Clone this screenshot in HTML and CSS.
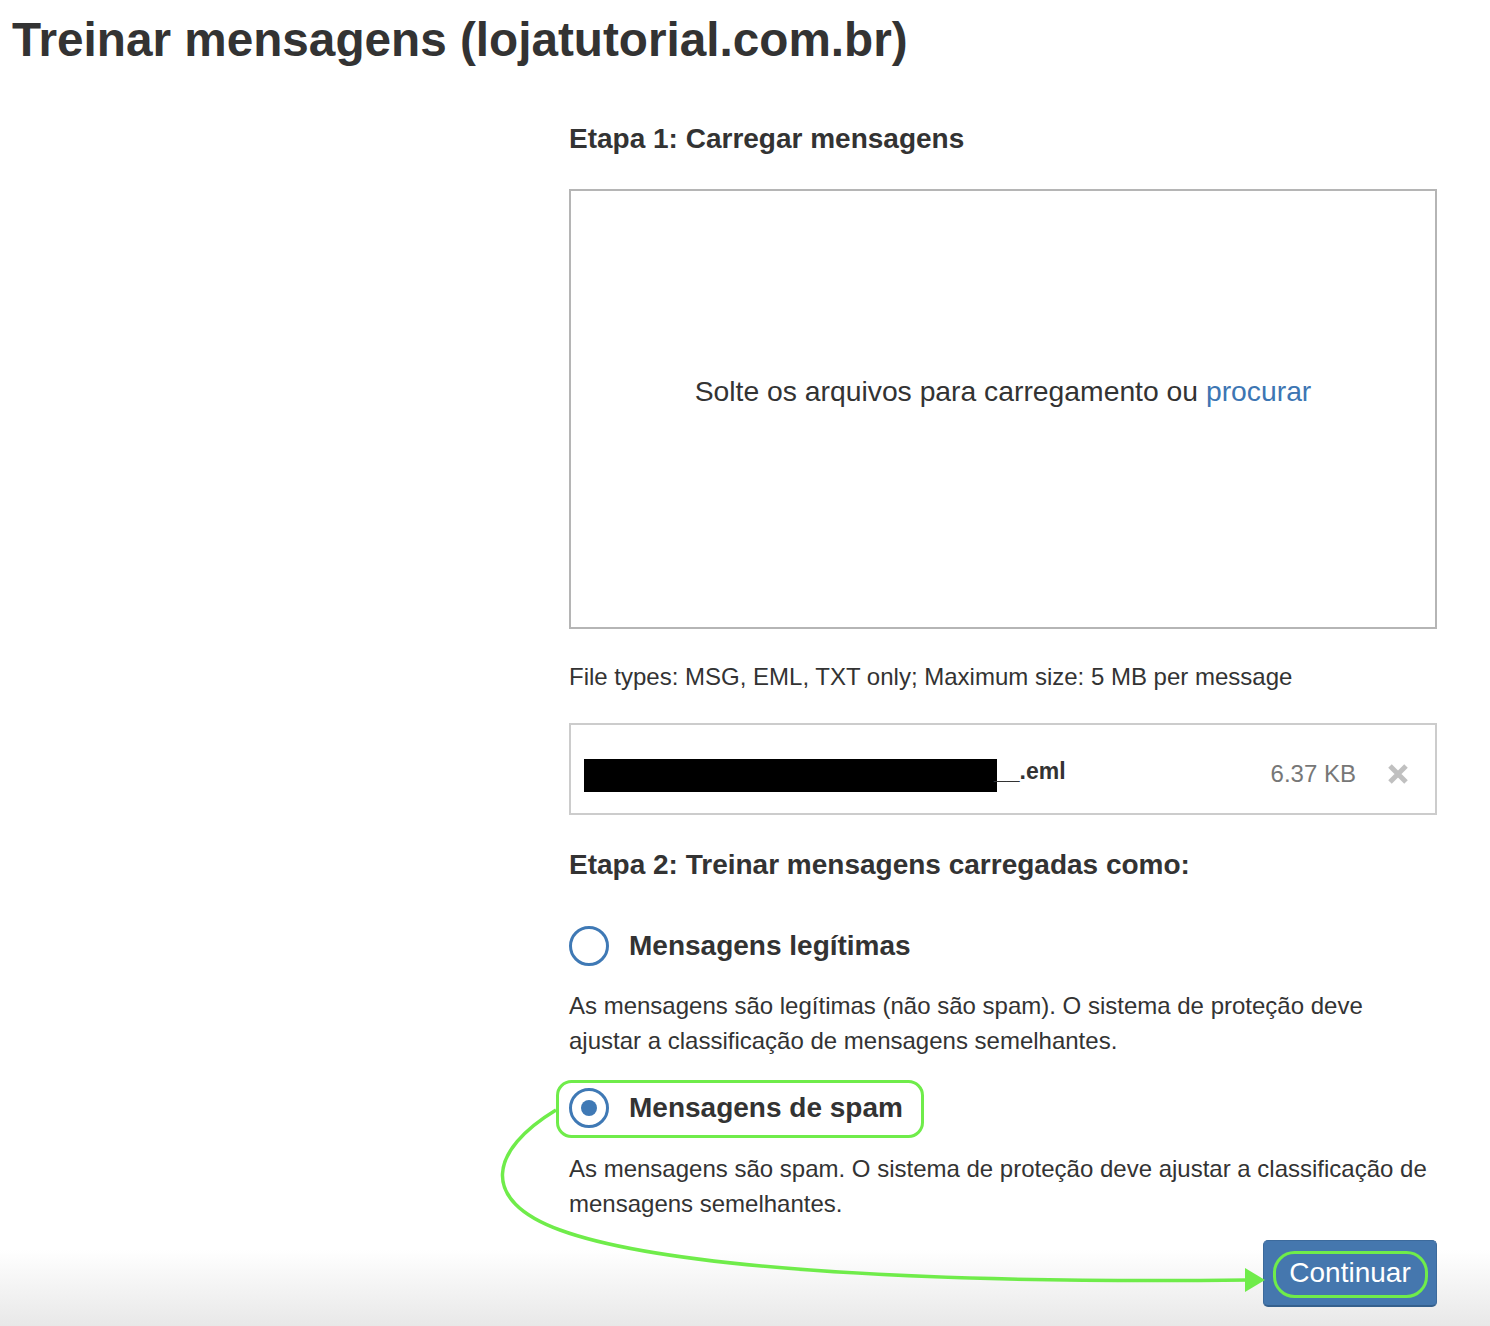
FILE: index.html
```html
<!DOCTYPE html>
<html lang="pt-BR">
<head>
<meta charset="utf-8">
<title>Treinar mensagens</title>
<link rel="stylesheet" href="styles.css">
</head>
<body>
<div class="page">
  <h1 class="title">Treinar mensagens (lojatutorial.com.br)</h1>
  <main class="main">
    <h2 class="step step-1">Etapa 1: Carregar mensagens</h2>
    <div class="dropzone">
      <p class="drop-text">Solte os arquivos para carregamento ou <a class="link" href="#">procurar</a></p>
    </div>
    <p class="hint">File types: MSG, EML, TXT only; Maximum size: 5 MB per message</p>
    <div class="file-row">
      <div class="file-name"><span class="redact"></span><span class="ext">__.eml</span></div>
      <span class="file-size">6.37 KB</span>
      <svg class="remove" width="22" height="22" viewBox="0 0 22 22"><path d="M3 3 L19 19 M19 3 L3 19" stroke="#c0c0c0" stroke-width="5" stroke-linecap="butt" fill="none"/></svg>
    </div>
    <h2 class="step step-2">Etapa 2: Treinar mensagens carregadas como:</h2>
    <label class="option option-1"><span class="radio"></span><span class="option-label">Mensagens legítimas</span></label>
    <p class="desc desc-1">As mensagens são legítimas (não são spam). O sistema de proteção deve ajustar a classificação de mensagens semelhantes.</p>
    <label class="option option-2"><span class="radio checked"></span><span class="option-label">Mensagens de spam</span></label>
    <p class="desc desc-2">As mensagens são spam. O sistema de proteção deve ajustar a classificação de mensagens semelhantes.</p>
    <div class="actions"><button class="btn" type="button">Continuar</button></div>
  </main>
  <svg class="annot" width="1490" height="1326" viewBox="0 0 1490 1326">
    <rect x="557.5" y="1081.5" width="365" height="55" rx="14" fill="none" stroke="#6fec4a" stroke-width="3"/>
    <rect x="1274.5" y="1252.5" width="152" height="44" rx="20" fill="none" stroke="#6fec4a" stroke-width="3"/>
    <path d="M556 1110 C 490 1150, 478 1200, 560 1230 C 658 1266, 900 1284, 1248 1280" fill="none" stroke="#6fec4a" stroke-width="3.5"/>
    <polygon points="1245,1268 1265,1280 1245,1292" fill="#6fec4a"/>
  </svg>
</div>
</body>
</html>
```

FILE: styles.css
```css
html {
  min-height: 100%;
  background: linear-gradient(to bottom, #ffffff 0, #ffffff 1250px, #e8e8e8 1326px);
}
body {
  margin: 0;
  font-family: "Liberation Sans", Arial, Helvetica, sans-serif;
  color: #333333;
}
.page {
  position: relative;
  width: 1490px;
  height: 1326px;
}
.title {
  margin: 0;
  padding: 12px 0 0 12px;
  font-size: 47.7px;
  line-height: 56px;
  font-weight: bold;
  color: #333333;
}
.main {
  margin-left: 569px;
  width: 868px;
}
.step {
  margin: 0;
  font-size: 28px;
  line-height: 34px;
  font-weight: bold;
}
.step-1 { margin-top: 54px; }
.step-2 { margin-top: 33px; }
.dropzone {
  margin-top: 33px;
  height: 440px;
  box-sizing: border-box;
  border: 2px solid #b5b5b5;
  display: flex;
  align-items: center;
  justify-content: center;
  padding-bottom: 36px;
}
.drop-text {
  margin: 0;
  font-size: 28.3px;
  line-height: 34px;
}
.link {
  color: #3d76b3;
  text-decoration: none;
}
.hint {
  margin: 31px 0 0;
  font-size: 24px;
  line-height: 34px;
}
.file-row {
  margin-top: 29px;
  height: 92px;
  box-sizing: border-box;
  border: 2px solid #cccccc;
  display: flex;
  align-items: center;
  padding: 10px 26px 0 13px;
}
.file-name {
  flex: 1;
  display: flex;
  align-items: center;
}
.redact {
  display: inline-block;
  width: 413px;
  height: 33px;
  background: #000000;
  margin-top: 3px;
}
.ext {
  font-size: 23px;
  font-weight: bold;
  line-height: 30px;
  margin-top: -6px;
  margin-left: -3px;
}
.file-size {
  font-size: 24px;
  color: #777777;
  margin-right: 31px;
}
.remove {
  display: block;
}
.option {
  display: flex;
  align-items: center;
  gap: 20px;
  height: 40px;
}
.option-1 { margin-top: 44px; }
.option-2 { margin-top: 30px; }
.radio {
  width: 40px;
  height: 40px;
  box-sizing: border-box;
  border: 3px solid #3f79b5;
  border-radius: 50%;
  display: flex;
  align-items: center;
  justify-content: center;
}
.radio.checked::after {
  content: "";
  width: 16px;
  height: 16px;
  border-radius: 50%;
  background: #3f79b5;
}
.option-label {
  font-size: 28px;
  font-weight: bold;
}
.desc {
  margin: 0;
  font-size: 24px;
  line-height: 35px;
}
.desc-1 { margin-top: 22px; }
.desc-2 { margin-top: 23px; }
.actions {
  margin-top: 19px;
  display: flex;
  justify-content: flex-end;
}
.btn {
  width: 174px;
  height: 67px;
  box-sizing: border-box;
  background: #4577ae;
  border: 1px solid #3c6a9c;
  border-bottom: 2px solid #35608d;
  border-radius: 5px;
  color: #ffffff;
  font-family: "Liberation Sans", Arial, sans-serif;
  font-size: 28px;
  padding: 0;
}
.annot {
  position: absolute;
  left: 0;
  top: 0;
  pointer-events: none;
}
```
